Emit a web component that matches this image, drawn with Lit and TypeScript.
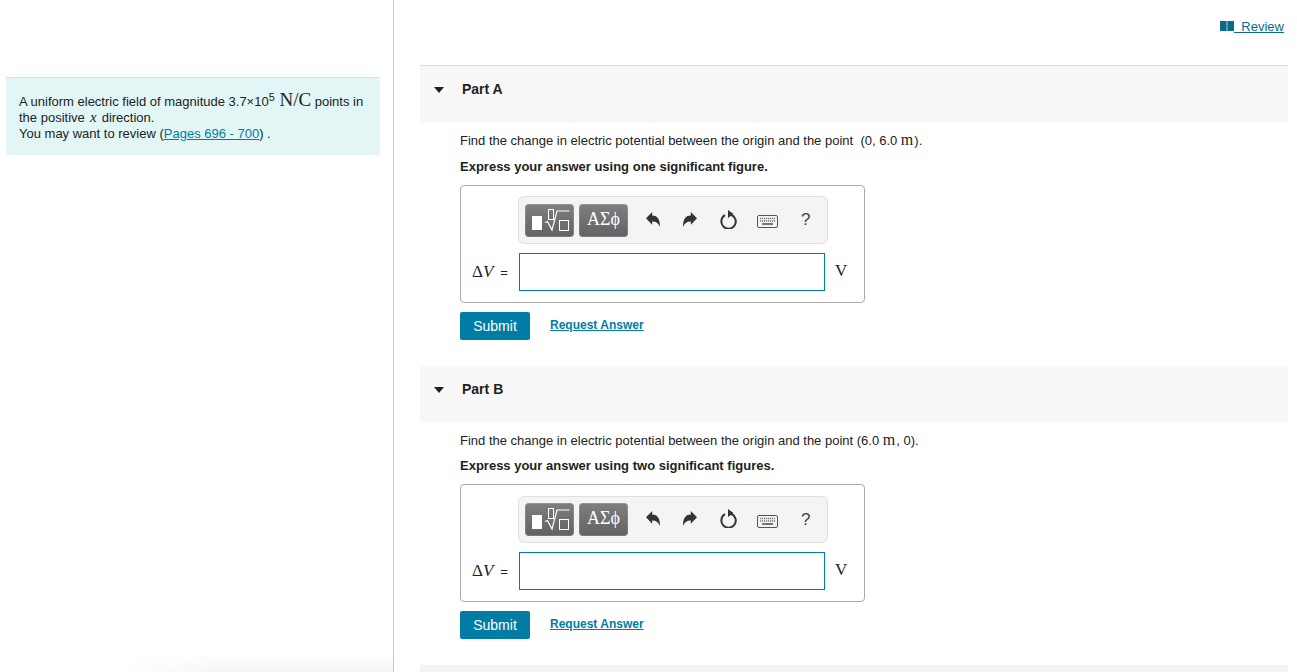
import { LitElement, html, css, svg } from "lit";
import { customElement } from "lit/decorators.js";

const undoIcon = svg`<path d="M0 6.2 6.2 0v3.6c5 0 8.3 4 7.6 11.4-1-3.7-3.4-5.6-7.6-5.6v3.4z" fill="#333"/>`;

@customElement("app-root")
export class AppRoot extends LitElement {
  static styles = css`
    :host { display: block; height: 672px; overflow: hidden; font-family: "Liberation Sans", Arial, sans-serif; color: #222; font-size: 13px; background: #fff; }
    a { color: #007da6; }
    .page { display: grid; grid-template-columns: 393px 1px 1fr; height: 672px; position: relative; overflow: hidden; }
    .left { padding: 77px 13px 0 6px; }
    .intro { background: #e2f6f6; border-top: 1px solid #d9e2e2; height: 78px; box-sizing: border-box; padding: 16px 13px 0; line-height: 16px; }
    .intro sup { font-size: 11px; line-height: 0; vertical-align: 5px; }
    .m { font-family: "Liberation Serif", serif; font-size: 16px; line-height: 0; letter-spacing: 1px; }
    .big { font-size: 19px; margin-left: 1px; letter-spacing: 0; }
    .x { font-size: 15px; font-style: italic; letter-spacing: 0; margin: 0 1.5px; }
    .it { font-style: italic; }
    .divider { background: #bdcbdc; }
    .right { padding: 0 9px 0 26px; min-width: 0; }
    .top { height: 65px; box-sizing: border-box; padding: 18px 4px 0 0; display: flex; justify-content: flex-end; }
    .review { display: flex; align-items: center; height: 16px; font-size: 13px; text-decoration: underline; white-space: pre; color: #0b6b8c; }
    .head { background: #f8f8f8; display: flex; align-items: flex-start; box-sizing: border-box; padding-top: 15px; }
    .head.a { border-top: 1px solid #e0e0e0; height: 58px; }
    .head.b { height: 56px; }
    .head.c { height: 10px; margin-top: 26px; padding: 0; background: #f4f4f4; }
    .tri { width: 0; height: 0; border-left: 5.5px solid transparent; border-right: 5.5px solid transparent; border-top: 6px solid #222; margin: 6px 0 0 14px; }
    .title { font-weight: 700; font-size: 14px; line-height: 16px; margin-left: 18px; color: #222; }
    .body { padding-left: 40px; }
    .q { line-height: 16px; white-space: pre; }
    .q.pa { margin-top: 10px; }
    .q.pb { margin-top: 11px; }
    .ex { font-weight: 700; line-height: 16px; }
    .ex.e1 { margin-top: 10px; }
    .ex.e2 { margin-top: 9px; }
    .box { width: 405px; height: 118px; box-sizing: border-box; border: 1px solid #aaa; border-radius: 4px; margin-top: 10px; }
    .box.bx .toolbar { margin-top: 11px; height: 47px; }
    .toolbar { margin: 10px 0 0 57px; width: 310px; height: 48px; box-sizing: border-box; border: 1px solid #e0e0e0; border-radius: 6px; background: #f4f4f4; display: flex; align-items: center; padding: 0 0 0 6px; }
    .tbtn { height: 33px; border-radius: 4px; background: linear-gradient(#7f7f7f, #626262); box-shadow: inset 0 0 0 1px rgba(255,255,255,.14); color: #fff; display: flex; align-items: center; justify-content: center; box-sizing: border-box; }
    .t1 { width: 49px; margin-right: 5px; }
    .t2 { width: 49px; font-family: "Liberation Serif", serif; font-size: 18px; line-height: 30px; padding-bottom: 3px; margin-right: 17px; }
    .ic { display: flex; align-items: center; justify-content: center; height: 20px; }
    .ic.un { width: 15px; margin-right: 22px; padding-bottom: 2px; }
    .ic.re { width: 15px; margin-right: 23px; padding-bottom: 2px; }
    .ic.rl { width: 18px; margin-right: 19px; padding-bottom: 2px; }
    .ic.kb { width: 21px; margin-right: 23px; padding-top: 3px; }
    .ic.help { font-size: 17px; color: #444; }
    .answer { display: flex; align-items: center; margin-top: 9px; height: 38px; }
    .lab { width: 58px; box-sizing: border-box; padding-left: 11px; font-family: "Liberation Serif", serif; font-size: 17px; white-space: nowrap; }
    .lab .eq { font-family: "Liberation Sans", sans-serif; font-size: 13px; margin-left: 7px; }
    .input { width: 306px; height: 38px; box-sizing: border-box; border: 1px solid #007da6; background: #fff; }
    .unit { font-family: "Liberation Serif", serif; font-size: 17px; margin-left: 10px; padding-bottom: 2px; color: #222; }
    .actions { display: flex; align-items: center; margin-top: 9px; }
    .submit { width: 70px; height: 28px; background: #007ca5; border-radius: 2px; color: #fff; font-size: 14px; display: flex; align-items: center; justify-content: center; }
    .req { margin-left: 20px; font-weight: 700; font-size: 12px; text-decoration: underline; position: relative; top: -1px; }
    .shadow { position: absolute; left: 120px; width: 273px; bottom: 0; height: 18px; background: linear-gradient(#fff, #f6f6f6); -webkit-mask-image: linear-gradient(90deg, transparent, #000 35%); mask-image: linear-gradient(90deg, transparent, #000 35%); pointer-events: none; }
  `;

  private part(name: string, cls: string, q: unknown, figures: string, first: boolean) {
    return html`
      <div class="head ${cls}"><div class="tri"></div><div class="title">Part ${name}</div></div>
      <div class="body" style="padding-bottom:${first ? 26 : 0}px">
        <div class="q ${first ? "pa" : "pb"}">${q}</div>
        <div class="ex ${first ? "e1" : "e2"}">Express your answer using ${figures} significant ${figures === "one" ? "figure" : "figures"}.</div>
        <div class="box ${first ? "" : "bx"}">
          <div class="toolbar">
            <div class="tbtn t1">
              <svg width="49" height="33" viewBox="0 0 49 33">
                <rect x="7" y="12" width="10" height="14" fill="#fff"/>
                <rect x="23.5" y="5.5" width="5" height="10" fill="none" stroke="#fff"/>
                <path d="M20 18.5l2.5-1L27 26l5-19h12.5" fill="none" stroke="#fff" stroke-width="1.2"/>
                <rect x="34.5" y="16.5" width="9" height="10" fill="none" stroke="#fff"/>
              </svg>
            </div>
            <div class="tbtn t2">ΑΣϕ</div>
            <div class="ic un"><svg width="14" height="15" viewBox="0 0 14 15">${undoIcon}</svg></div>
            <div class="ic re"><svg width="14" height="15" viewBox="0 0 14 15"><g transform="matrix(-1 0 0 1 14 0)">${undoIcon}</g></svg></div>
            <div class="ic rl"><svg width="18" height="19" viewBox="0 0 18 19"><path d="M5 5.2a7.2 7.2 0 1 0 6-.5" fill="none" stroke="#333" stroke-width="2"/><path d="M8 0v8l5.5-4z" fill="#333"/></svg></div>
            <div class="ic kb"><svg width="21" height="13" viewBox="0 0 21 13"><rect x=".5" y=".5" width="20" height="12" rx="1.5" fill="#f4f4f4" stroke="#555"/><path d="M3 3.5h15M3 6h15" stroke="#777" stroke-width="1.4" stroke-dasharray="1.2 .8"/><path d="M5 9h11" stroke="#555" stroke-width="1.6"/></svg></div>
            <div class="ic help">?</div>
          </div>
          <div class="answer">
            <div class="lab">Δ<span class="it">V</span><span class="eq">=</span></div>
            <div class="input"></div>
            <div class="unit">V</div>
          </div>
        </div>
        <div class="actions"><div class="submit">Submit</div><a class="req" href="#">Request Answer</a></div>
      </div>
    `;
  }

  render() {
    return html`
      <div class="page">
        <div class="left">
          <div class="intro">
            A uniform electric field of magnitude 3.7×10<sup>5</sup> <span class="m big">N/C</span> points in the positive <span class="m x">x</span> direction.<br />
            You may want to review (<a href="#">Pages 696 - 700</a>) .
          </div>
        </div>
        <div class="divider"></div>
        <div class="right">
          <div class="top">
            <a class="review" href="#"><svg width="14" height="10" viewBox="0 0 14 10"><rect width="14" height="10" fill="#7fb0c2"/><rect width="6.3" height="10" fill="#0a6a8a"/><rect x="7.7" width="6.3" height="10" fill="#0a6a8a"/></svg>  Review</a>
          </div>
          ${this.part("A", "a", html`Find the change in electric potential between the origin and the point  (0, 6.0 <span class="m">m</span>).`, "one", true)}
          ${this.part("B", "b", html`Find the change in electric potential between the origin and the point (6.0 <span class="m">m</span>, 0).`, "two", false)}
          <div class="head c"></div>
        </div>
        <div class="shadow"></div>
      </div>
    `;
  }
}
